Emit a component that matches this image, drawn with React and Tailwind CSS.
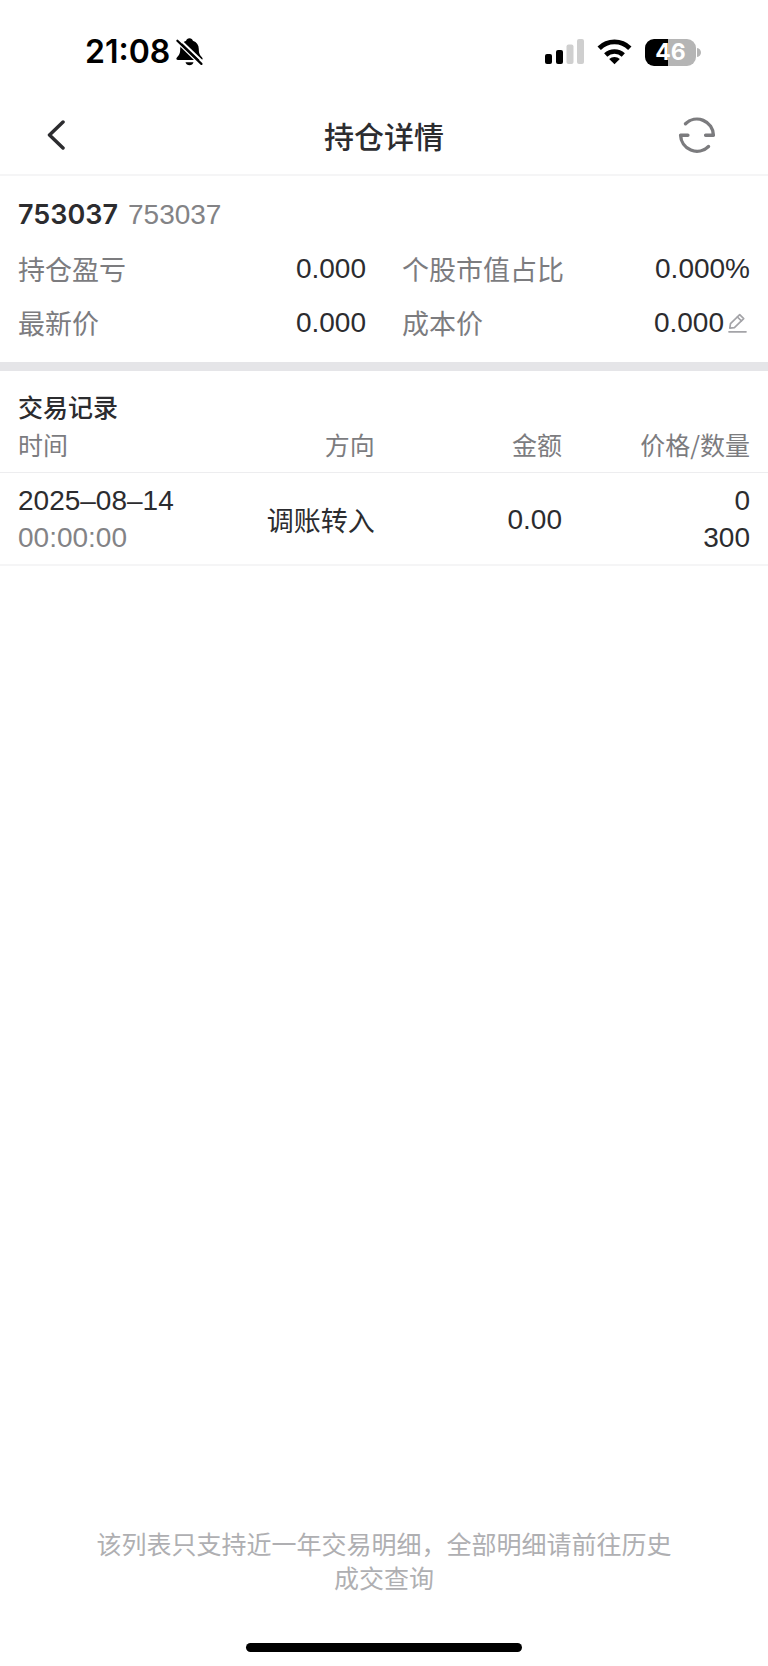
import React from "react";

const summary = [
  { label: "持仓盈亏", value: "0.000" },
  { label: "个股市值占比", value: "0.000%" },
  { label: "最新价", value: "0.000" },
  { label: "成本价", value: "0.000", editable: true },
];

const records = [
  { date: "2025–08–14", time: "00:00:00", direction: "调账转入", amount: "0.00", price: "0", quantity: "300" },
];

function BellOffIcon() {
  return (
    <svg width="27" height="28" viewBox="0 0 27 28" aria-hidden="true">
      <path
        d="M13.500 0.300c-1.800 0-3 0.900-3.400 2.400-3.900 1.300-5.900 4.300-5.900 8.200 0 4.500-1 5.800-2.900 8-0.900 1-1.100 1.800-0.800 2.400 0.200 0.500 0.700 0.700 1.500 0.700h23c0.800 0 1.300-0.200 1.500-0.700 0.300-0.600 0.100-1.400-0.800-2.400-1.900-2.200-2.900-3.500-2.900-8 0-3.900-2-6.900-5.900-8.200-0.400-1.500-1.600-2.400-3.400-2.400z"
        fill="#000"
      />
      <path d="M9.500 24.200h8c-0.500 1.900-2 3-4 3s-3.500-1.100-4-3z" fill="#000" />
      <path d="M3.200 1L27 24" stroke="#fff" strokeWidth="2" />
      <path d="M-0.500 2.800L24.500 27" stroke="#fff" strokeWidth="1.800" />
      <path d="M1.400 2.700L25.400 25.900" stroke="#000" strokeWidth="2.200" strokeLinecap="round" />
    </svg>
  );
}

function SignalIcon() {
  return (
    <svg width="39" height="26" viewBox="0 0 39 26" aria-hidden="true">
      <rect x="0" y="15" width="7" height="10" rx="2" fill="#000" />
      <rect x="11" y="11" width="7" height="14" rx="2" fill="#000" />
      <rect x="21.500" y="5.500" width="7" height="19.500" rx="2" fill="#cfcfcf" />
      <rect x="32" y="0" width="7" height="25" rx="2" fill="#cfcfcf" />
    </svg>
  );
}

function WifiIcon() {
  return (
    <svg width="35" height="26" viewBox="0 0 35 26" aria-hidden="true">
      <path d="M17.500 25.300l-5.300-5.300a7.800 7.800 0 0 1 10.600 0z" fill="#000" />
      <path d="M8.700 16a12.700 12.700 0 0 1 17.600 0" fill="none" stroke="#000" strokeWidth="4.600" />
      <path d="M2.200 9.200a21.800 21.800 0 0 1 30.600 0" fill="none" stroke="#000" strokeWidth="4.800" />
    </svg>
  );
}

function Battery() {
  return (
    <div className="flex items-center gap-px">
      <div className="flex h-[27px] w-[51px] items-center justify-center rounded-[9px] bg-linear-to-r from-black from-46% to-[#b5b5b5] to-46% font-[Inter,sans-serif] text-[23px] leading-none font-bold text-white">
        46
      </div>
      <svg width="4" height="9" viewBox="0 0 4 9" aria-hidden="true">
        <path d="M0 0c2.500 0.500 4 2.300 4 4.500s-1.500 4-4 4.500z" fill="#b5b5b5" />
      </svg>
    </div>
  );
}

function EditIcon() {
  return (
    <svg width="19" height="20" viewBox="0 0 19 20" fill="none" stroke="#a4a4a8" strokeWidth="1.700" strokeLinejoin="round" strokeLinecap="round" aria-hidden="true">
      <path d="M1.800 15.200l0.700-4.600L11.700 1.700l4 3.900-9.300 9z" />
      <path d="M9.400 4l4 3.900" />
      <path d="M1 18.800h17" />
    </svg>
  );
}

export default function App() {
  return (
    <div
      lang="zh-CN"
      className="flex min-h-screen w-full flex-col bg-white font-['Noto_Sans_CJK_SC',sans-serif] text-[#2c2c2f]"
    >
      <div className="flex h-24 items-center justify-between pt-2 pr-[67px] pl-[85px]">
        <div className="flex items-center gap-[6px] text-black">
          <span className="font-[Inter,sans-serif] text-[32px] leading-none font-semibold">21:08</span>
          <BellOffIcon />
        </div>
        <div className="flex items-center gap-[13px]">
          <SignalIcon />
          <WifiIcon />
          <Battery />
        </div>
      </div>

      <header className="grid h-20 grid-cols-[1fr_auto_1fr] items-center border-b-2 border-[#f5f5f6] px-9">
        <button type="button" aria-label="返回" className="flex size-10 items-center justify-center">
          <svg width="18" height="30" viewBox="0 0 18 30" fill="none" stroke="#2c2c2f" strokeWidth="3.500" strokeLinecap="round" strokeLinejoin="round" aria-hidden="true">
            <path d="M16 2L2.500 15 16 28" />
          </svg>
        </button>
        <h1 className="text-[30px] leading-10 font-medium">持仓详情</h1>
        <button type="button" aria-label="刷新" className="mr-[15px] flex size-10 items-center justify-center justify-self-end">
          <svg width="38" height="38" viewBox="0 0 38 38" fill="none" stroke="#7b7b7e" strokeWidth="3.400" strokeLinecap="round" strokeLinejoin="round" aria-hidden="true">
            <path d="M7.500 7.800A16.400 16.400 0 0 1 35.400 19.200h-7.800" />
            <path d="M30.500 30.500A16.400 16.400 0 0 1 2.600 19.200h7.300" />
          </svg>
        </button>
      </header>

      <main className="flex flex-1 flex-col">
        <section className="border-b-[9px] border-[#e5e5e8] px-[18px] py-3">
          <div className="flex items-center gap-[10px] leading-[54px]">
            <span className="font-[Inter,sans-serif] text-[27px] font-semibold">753037</span>
            <span className="font-['Liberation_Sans',sans-serif] text-[28px] text-[#838386]">753037</span>
          </div>
          <dl className="grid grid-cols-2 gap-x-9 leading-[54px]">
            {summary.map((item) => (
              <div key={item.label} className="flex items-center justify-between">
                <dt className="text-[27px] text-[#7c7c7f]">{item.label}</dt>
                <dd className="flex items-center gap-1 font-['Liberation_Sans',sans-serif] text-[28px]">
                  {item.value}
                  {item.editable && (
                    <button type="button" aria-label="编辑成本价" className="pr-[3px]">
                      <EditIcon />
                    </button>
                  )}
                </dd>
              </div>
            ))}
          </dl>
        </section>

        <section className="pt-4">
          <h2 className="px-[18px] text-[25px] leading-[38px] font-medium">交易记录</h2>
          <table className="w-full table-fixed">
            <thead>
              <tr className="border-b border-[#ededef] text-[25px] leading-[38px] text-[#7c7c7f]">
                <th scope="col" className="pb-[9px] pl-[18px] text-left font-normal">时间</th>
                <th scope="col" className="pb-[9px] text-right font-normal">方向</th>
                <th scope="col" className="pb-[9px] text-right font-normal">金额</th>
                <th scope="col" className="w-[206px] pr-[18px] pb-[9px] text-right font-normal">价格/数量</th>
              </tr>
            </thead>
            <tbody>
              {records.map((row) => (
                <tr
                  key={row.date + row.time}
                  className="border-b-2 border-[#f5f5f6] font-['Liberation_Sans',sans-serif] text-[28px] leading-[37px]"
                >
                  <td className="pt-[9px] pb-2 pl-[18px] whitespace-nowrap">
                    <div>{row.date}</div>
                    <div className="text-[#838386]">{row.time}</div>
                  </td>
                  <td className="pt-[9px] pb-2 text-right font-['Noto_Sans_CJK_SC',sans-serif] text-[27px] whitespace-nowrap">
                    {row.direction}
                  </td>
                  <td className="pt-[9px] pb-2 text-right">{row.amount}</td>
                  <td className="pt-[9px] pr-[18px] pb-2 text-right">
                    <div>{row.price}</div>
                    <div>{row.quantity}</div>
                  </td>
                </tr>
              ))}
            </tbody>
          </table>
        </section>
      </main>

      <footer className="flex flex-col items-center gap-[49px] pb-[14px]">
        <p className="px-24 text-center text-[25px] leading-[34px] text-[#afafb2]">
          该列表只支持近一年交易明细，全部明细请前往历史成交查询
        </p>
        <div className="h-[9px] w-[276px] rounded-full bg-black" />
      </footer>
    </div>
  );
}
